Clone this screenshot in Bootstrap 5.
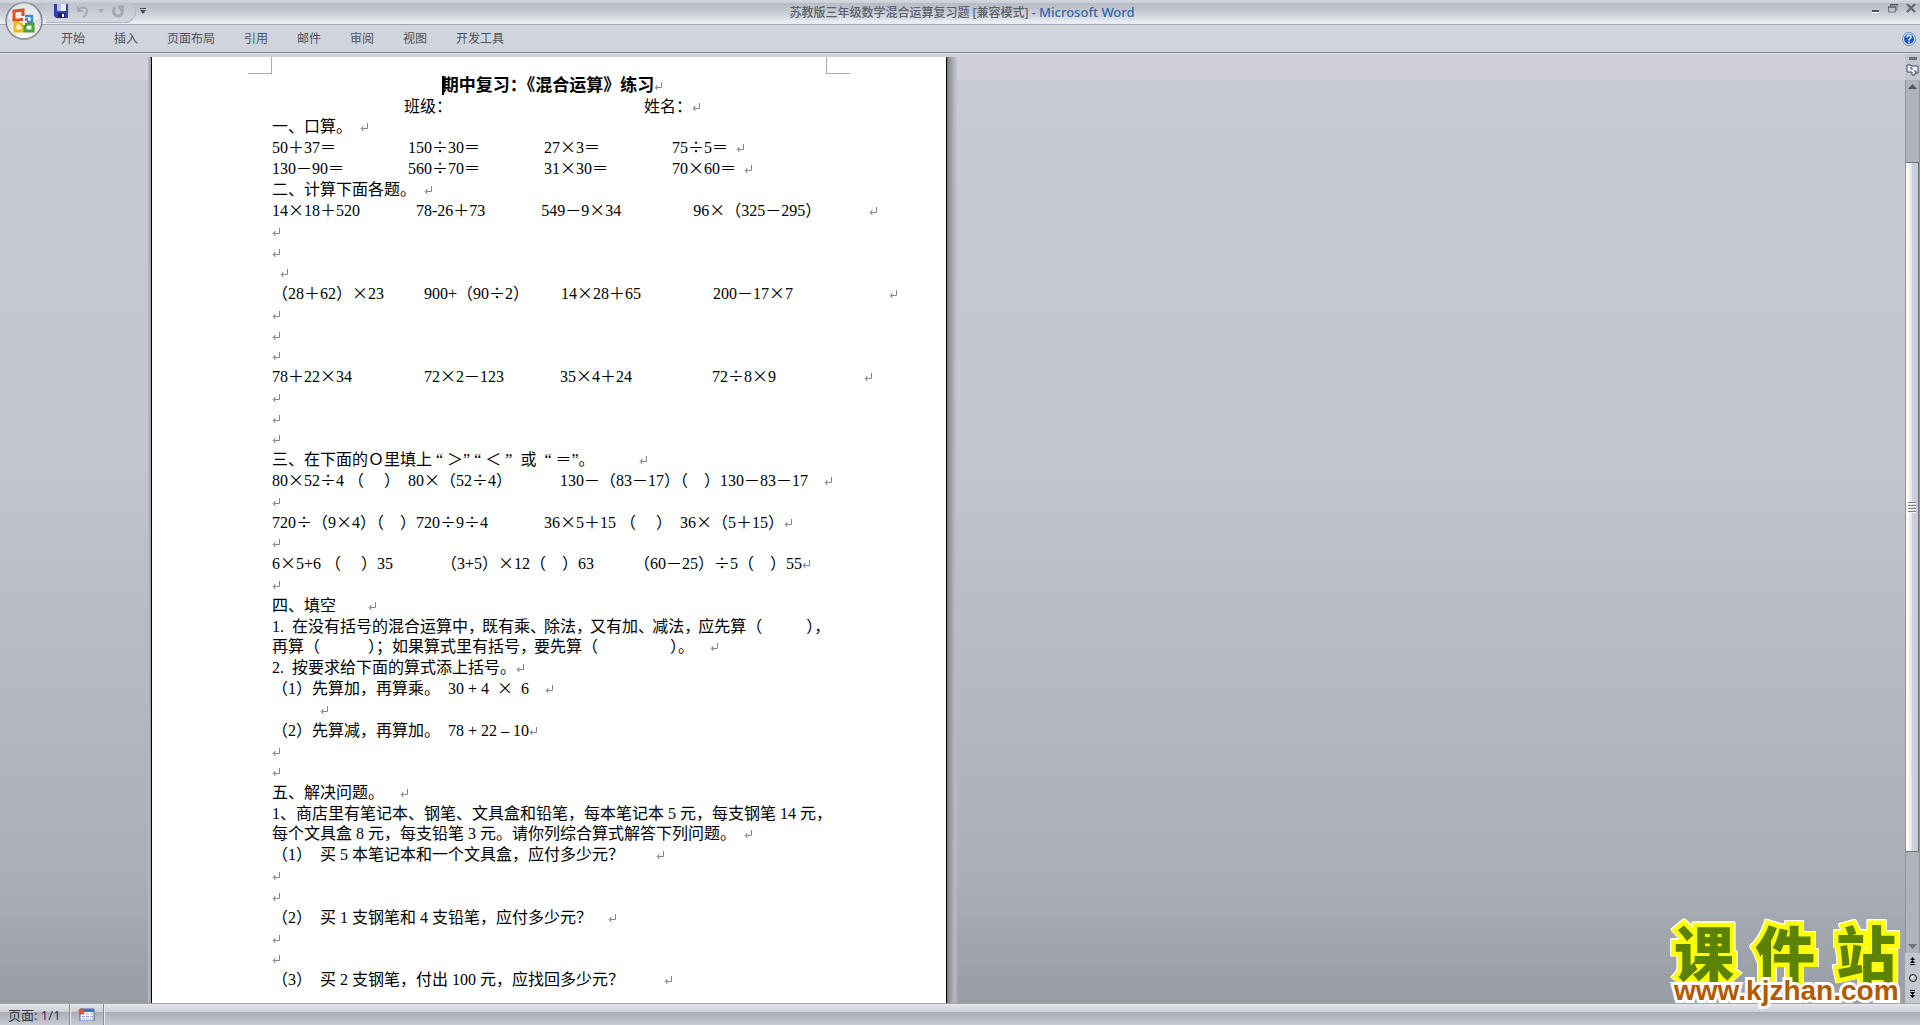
<!DOCTYPE html>
<html lang="zh-CN">
<head>
<meta charset="utf-8">
<meta name="viewport" content="width=device-width, initial-scale=1">
<title>苏教版三年级数学混合运算复习题 - Microsoft Word</title>
<link href="https://cdn.jsdelivr.net/npm/bootstrap@5.3.0/dist/css/bootstrap.min.css" rel="stylesheet">
<style>
body{font-family:"Noto Sans","Noto Sans CJK SC",sans-serif;font-size:12px;line-height:16px;color:#4b525c;background:#c8cbd3}
button{background:none;border:0;padding:0;color:inherit;display:flex;align-items:center;justify-content:center}
svg{display:block}
.titlebar{height:25px;display:grid;grid-template-columns:1fr auto 1fr;background:linear-gradient(#d3d7de 0,#c9cdd5 3px,#b8bcc6 3px,#bec2cb 8px,#c8cbd3 12px,#d2d5db 16px,#e0e3e8 20px,#e8ebf2 21px,#e8ebf2 24px);border-bottom:1px solid #a3a9b3}
.titlebar h1{font-size:12px;line-height:16px;margin:0;padding-top:4px;padding-left:4px;color:#5b616b;white-space:pre}
.app-name{color:#2f69ae;font-size:13px}
.orb{left:5px;top:2px;width:38px;height:38px;z-index:3}
.quick{margin-left:46px;height:23px;width:90px;padding-left:8px;gap:8px;border:1px solid #b2b6bf;border-left:0;border-top:0;border-radius:0 12px 12px 0;background:linear-gradient(#d3d7de,#bfc3cc 4px,#d5d8de)}
.ribbon{height:28px;background:#d0d4dd;border-bottom:1px solid #7b828c;padding-left:61px;box-shadow:0 1px #e3e9ee;z-index:2}
.ribbon nav{gap:29px}
.ribbon a{color:#4b525c;text-decoration:none}
.workspace{min-height:0;background:linear-gradient(#d2cfda 0,#d2cfda 27px,#c8cad3 27px,#c3c6cf 42%,#bbbfc8 54%,#aaaeb6 87%,#989da5 100%)}
.sheet{margin:4px 0 0 148px;width:810px;overflow:hidden}
.edge-left{width:4px;background:linear-gradient(90deg,#b8bbc4,#9da0a9 3px,#000 3px)}
.edge-right{width:12px;background:linear-gradient(90deg,#000 1px,#75777d 1px,#8b8e95 3px,#a3a6ae 6px,#b9bcc5 9px,#c4c7d000)}
.paper{background:#fff;padding-bottom:80px;overflow:hidden}
.crops{height:17px;padding:0 96px;margin-bottom:1px}
.crops span{border-bottom:1px solid #a6a9b3}
.crops .cl{width:24px;border-right:1px solid #a6a9b3}
.crops .cr{width:24px;border-left:1px solid #a6a9b3}
.doc{font-family:"Liberation Serif","Noto Sans CJK SC",serif;color:#000;font-size:16px;line-height:21px;padding:0 114px 0 120px;white-space:pre;text-spacing-trim:space-all}
.doc p,.doc h2{margin:0;height:21px;line-height:21px}
.doc .snug{height:20px;line-height:20px}
.doc h2{font-size:17px;font-weight:700;text-align:center}
.z{font-family:"Noto Sans CJK SC",sans-serif;display:inline-block;width:16px;text-align:center;line-height:16px}
.h{font-feature-settings:"halt"}
.n{margin-right:-2px}
.pm{display:inline-block;width:8px;height:8px;vertical-align:1px;fill:none;stroke:#858585}
.caret{display:inline-block;width:2px;height:19px;margin-right:-2px;vertical-align:-4px;background:#000}
.vscroll{width:15px;background:#c3c6cf}
.track{background:#b0b3bc;border-left:1px solid #92959e;border-right:1px solid #92959e}
.thumb{border:1px solid #6d717b;border-left:0;background:linear-gradient(90deg,#fffbe9 3px,#eef1f7 3px,#e2e5ee 6px,#ced2de 6px,#c6cad6);gap:1px}
.thumb i{width:8px;height:1px;background:#7c8187;box-shadow:0 1px #f4f6fa}
.status{height:22px;font-size:13px;color:#33373d;border-top:1px solid #a3a6af;background:linear-gradient(#e4e6ea,#cbced5 8px,#a9adb7 8px,#c8cbd3)}
.status>div{border-right:1px solid #868a93;box-shadow:1px 0 #e6e8ec}
.brand{right:20px;bottom:22px;width:230px;font-family:"Noto Sans CJK SC",sans-serif;font-weight:900}
.brand-cn{font-size:60px;line-height:56px;color:#5b8200;-webkit-text-stroke:9px #fdff00;paint-order:stroke fill;filter:drop-shadow(1px 0 #fff) drop-shadow(-1px 0 #fff) drop-shadow(0 -1px #fff)}
.brand-url{font-family:"Liberation Sans",sans-serif;font-weight:700;font-size:28px;line-height:24px;color:#b35a00;-webkit-text-stroke:6px #fff;paint-order:stroke fill;text-decoration:none;padding-left:4px}
</style>
<script src="https://cdn.jsdelivr.net/npm/bootstrap@5.3.0/dist/js/bootstrap.bundle.min.js"></script>
</head>
<body class="vh-100 overflow-hidden d-flex flex-column position-relative">
<svg width="0" height="0" class="position-absolute"><symbol id="ret" viewBox="0 0 8 8"><path d="M7.500 0v5.500H2M3.500 3L1 5.500 3.500 8M2.500 4v3"/></symbol></svg>

<button class="orb position-absolute" aria-label="Office">
<svg width="38" height="38" viewBox="0 0 38 38"><defs><radialGradient id="og" cx=".5" cy=".85" r=".9"><stop offset="0" stop-color="#fff"/><stop offset=".5" stop-color="#e4e5e9"/><stop offset="1" stop-color="#b9bcc4"/></radialGradient></defs><circle cx="19" cy="19" r="18" fill="url(#og)" stroke="#83868e" stroke-width="1.500"/><path d="M3 17a16 16 0 0 1 32 0q-16 4-32 0" fill="#fff" opacity=".5"/>
<g fill="none" stroke-width="3"><path d="M15 18H9V9l9-1v6" stroke="#e0501a"/><path d="M20 14h7v6h-5" stroke="#3c8fd0" stroke-width="2.500"/><path d="M15 21h-5v8h8v-6" stroke="#f7b51c"/><path d="M22 22h6v7h-8v-6" stroke="#4aa032"/></g><path d="M15 16h3v3h-3z" fill="#e0501a"/><path d="M20 16h3v3h-3z" fill="#3c8fd0"/><path d="M15 21h3v3h-3z" fill="#f7b51c"/><path d="M20 21h3v3h-3z" fill="#4aa032"/></svg></button>

<header class="titlebar flex-shrink-0">
<div class="d-flex align-items-start">
<div class="quick d-flex align-items-center">
<button aria-label="保存"><svg width="14" height="14"><path d="M0 0h14v14H2L0 12z" fill="#3340a8"/><path d="M3 0h9v7H3z" fill="#e9edfb"/><path d="M3 0h4v7H3z" fill="#b3c1f0"/><path d="M4 9h7v5H4z" fill="#1c2560"/><path d="M8 10h2v3H8z" fill="#fff"/></svg></button>
<button aria-label="撤消"><svg width="14" height="13" fill="none" stroke="#a6aab5" stroke-width="2"><path d="M2 1v5h5M2 6c3-5 9-4 9 0 0 3-2 5-4 6"/></svg></button>
<button aria-label="撤消列表"><svg width="6" height="4"><path d="M0 0h6L3 4z" fill="#a6aab5"/></svg></button>
<button aria-label="恢复"><svg width="12" height="13" fill="none" stroke="#a6aab5" stroke-width="3"><path d="M3 2c-3 4-1 9 3 9s6-5 2-8M6 2h5v4"/></svg></button>
</div>
<button class="mt-1 ms-1 pt-1" aria-label="自定义快速访问工具栏"><svg width="6" height="6"><path d="M0 0h6v1H0zM0 2h6L3 6z" fill="#4a4e57"/></svg></button>
</div>
<h1>苏教版三年级数学混合运算复习题 [兼容模式] <span class="app-name">- Microsoft Word</span></h1>
<div class="d-flex justify-content-end align-items-start gap-2 pt-1 pe-1">
<button aria-label="最小化"><svg width="9" height="10"><path d="M1 6h7v2H1z" fill="#4f545e"/><path d="M1 8h7v1H1z" fill="#fff"/></svg></button>
<button aria-label="还原"><svg width="10" height="9" fill="none" stroke="#6b7486"><path d="M2.500 3V1H9v5H8M.500 3h7v5h-7z"/><path d="M2 .500h8M0 3h8" stroke="#4f545e"/></svg></button>
<button aria-label="关闭"><svg width="10" height="9"><path d="M1 0l8 8M9 0L1 8" stroke="#5b6272" stroke-width="2"/></svg></button>
</div>
</header>

<div class="ribbon flex-shrink-0 position-relative d-flex align-items-center justify-content-between">
<nav class="d-flex"><a href="#">开始</a><a href="#">插入</a><a href="#">页面布局</a><a href="#">引用</a><a href="#">邮件</a><a href="#">审阅</a><a href="#">视图</a><a href="#">开发工具</a></nav>
<button class="me-1" aria-label="帮助"><svg width="14" height="14"><circle cx="7" cy="7" r="6.500" fill="#d8e6fb" stroke="#5c8fd0"/><circle cx="7" cy="7" r="5" fill="#1d55d2"/><path d="M5 5.500c0-3 4-3 4-.500C9 6.500 7 6.500 7 8.500M7 9.500V11" fill="none" stroke="#fff" stroke-width="1.500"/></svg></button>
</div>

<main class="workspace flex-grow-1 d-flex">
<div class="flex-grow-1 overflow-hidden d-flex">
<div class="sheet d-flex">
<div class="edge-left flex-shrink-0"></div>
<div class="paper flex-grow-1">
<div class="crops d-flex justify-content-between"><span class="cl"></span><span class="cr"></span></div>
<article class="doc"><h2><span class="caret"></span>期中复习：<span class="h">《</span>混合运算》练习<svg class="pm"><use href="#ret"/></svg></h2><p>                                 班级：                                                姓名：<svg class="pm"><use href="#ret"/></svg></p><p class="snug">一、口算。  <svg class="pm"><use href="#ret"/></svg></p><p>50＋37＝                  150<span class="z">÷</span>30＝                27<span class="z">×</span>3＝                  75<span class="z">÷</span>5＝  <svg class="pm"><use href="#ret"/></svg></p><p>130－90＝                560<span class="z">÷</span>70＝                31<span class="z">×</span>30＝                70<span class="z">×</span>60＝  <svg class="pm"><use href="#ret"/></svg></p><p>二、计算下面各题。  <svg class="pm"><use href="#ret"/></svg></p><p>14<span class="z">×</span>18＋520              78-26＋73              549－9<span class="z">×</span>34                  96<span class="z">×</span>（325－295）            <svg class="pm"><use href="#ret"/></svg></p><p><svg class="pm"><use href="#ret"/></svg></p><p><svg class="pm"><use href="#ret"/></svg></p><p class="snug">  <svg class="pm"><use href="#ret"/></svg></p><p>（28＋62）<span class="z">×</span>23          900+（90<span class="z">÷</span>2）        14<span class="z">×</span>28＋65                  200－17<span class="z">×</span>7                        <svg class="pm"><use href="#ret"/></svg></p><p><svg class="pm"><use href="#ret"/></svg></p><p><svg class="pm"><use href="#ret"/></svg></p><p class="snug"><svg class="pm"><use href="#ret"/></svg></p><p>78＋22<span class="z">×</span>34                  72<span class="z">×</span>2－123              35<span class="z">×</span>4＋24                    72<span class="z">÷</span>8<span class="z">×</span>9                      <svg class="pm"><use href="#ret"/></svg></p><p><svg class="pm"><use href="#ret"/></svg></p><p><svg class="pm"><use href="#ret"/></svg></p><p class="snug"><svg class="pm"><use href="#ret"/></svg></p><p>三、在下面的Ｏ里填上 “ ＞” “ ＜ ”  或  “ ＝”。           <svg class="pm"><use href="#ret"/></svg></p><p>80<span class="z">×</span>52<span class="z">÷</span>4 （     ）  80<span class="z">×</span>（52<span class="z">÷</span>4）            130－（83－17<span class="h">）</span>（    ）130－83－17    <svg class="pm"><use href="#ret"/></svg></p><p><svg class="pm"><use href="#ret"/></svg></p><p>720<span class="z">÷</span>（9<span class="z">×</span>4<span class="h">）</span>（    ）720<span class="z">÷</span>9<span class="z">÷</span>4              36<span class="z">×</span>5＋15 （     ）  36<span class="z">×</span>（5＋15）<svg class="pm"><use href="#ret"/></svg></p><p class="snug"><svg class="pm"><use href="#ret"/></svg></p><p>6<span class="z">×</span>5+6 （     ）35            （3+5）<span class="z">×</span>12（    ）63          （60－25）<span class="z">÷</span>5（    ）55<svg class="pm"><use href="#ret"/></svg></p><p><svg class="pm"><use href="#ret"/></svg></p><p>四、填空        <svg class="pm"><use href="#ret"/></svg></p><p>1.  在没有括号的混合运算中<span class="n">，</span>既有乘<span class="n">、</span>除法<span class="n">，</span>又有加<span class="n">、</span>减法<span class="n">，</span>应先算（           <span class="h">）</span>，</p><p class="snug">再算（            <span class="h">）</span>；如果算式里有括号<span class="n">，</span>要先算（                  <span class="h">）</span>。    <svg class="pm"><use href="#ret"/></svg></p><p>2.  按要求给下面的算式添上括号。<svg class="pm"><use href="#ret"/></svg></p><p>（1）先算加，再算乘。  30 + 4  <span class="z">×</span>  6    <svg class="pm"><use href="#ret"/></svg></p><p>            <svg class="pm"><use href="#ret"/></svg></p><p>（2）先算减，再算加。  78 + 22 – 10<svg class="pm"><use href="#ret"/></svg></p><p><svg class="pm"><use href="#ret"/></svg></p><p class="snug"><svg class="pm"><use href="#ret"/></svg></p><p>五、解决问题。    <svg class="pm"><use href="#ret"/></svg></p><p>1、商店里有笔记本、钢笔、文具盒和铅笔，每本笔记本 5 元，每支钢笔 14 元，</p><p class="snug">每个文具盒 8 元，每支铅笔 3 元。请你列综合算式解答下列问题。  <svg class="pm"><use href="#ret"/></svg></p><p>（1）  买 5 本笔记本和一个文具盒，应付多少元？        <svg class="pm"><use href="#ret"/></svg></p><p><svg class="pm"><use href="#ret"/></svg></p><p><svg class="pm"><use href="#ret"/></svg></p><p>（2）  买 1 支钢笔和 4 支铅笔，应付多少元？    <svg class="pm"><use href="#ret"/></svg></p><p><svg class="pm"><use href="#ret"/></svg></p><p class="snug"><svg class="pm"><use href="#ret"/></svg></p><p>（3）  买 2 支钢笔，付出 100 元，应找回多少元？          <svg class="pm"><use href="#ret"/></svg></p></article>
</div>
<div class="edge-right flex-shrink-0"></div>
</div>
</div>
<aside class="vscroll flex-shrink-0 d-flex flex-column align-items-stretch">
<button class="pt-1" aria-label="拆分"><svg width="8" height="3"><path d="M0 0h8v3H0z" fill="#6c7078"/></svg></button>
<button class="mb-1 pt-1" aria-label="标尺"><svg width="13" height="12"><path d="M1 1h4v1h7v7H9v2H6V8H1z" fill="#f4f1f8" stroke="#34506b"/><path d="M4 4h2v2M8 7h2v2" fill="none" stroke="#34506b"/></svg></button>
<div class="track flex-grow-1 d-flex flex-column">
<button class="pt-1 pb-2" aria-label="向上滚动"><svg width="9" height="5"><path d="M0 5h9L4.500 0z" fill="#50545d"/></svg></button>
<div style="flex:65"></div>
<div class="thumb d-flex flex-column align-items-center justify-content-center" style="flex:690"><i></i><span></span><i></i><span></span><i></i><span></span><i></i></div>
<div style="flex:92"></div>
<button class="pb-1" aria-label="向下滚动"><svg width="9" height="5"><path d="M0 0h9L4.500 5z" fill="#6c717e"/></svg></button>
</div>
<button class="pt-1" aria-label="前一页"><svg width="7" height="9"><path d="M3.500 0L6 3H1zM3.500 3L6 6H1zM1 7h5v1H1z"/></svg></button>
<button class="pt-2" aria-label="选择浏览对象"><svg width="8" height="8"><circle cx="4" cy="4" r="3.500" fill="#c9cbd0" stroke="#111"/><circle cx="3" cy="3" r="1" fill="#fff"/></svg></button>
<button class="pt-2 pb-1" aria-label="下一页"><svg width="7" height="9"><path d="M1 0h5v1H1zM1 2h5L3.500 5zM1 5h5L3.500 8z"/></svg></button>
</aside>
</main>

<footer class="status flex-shrink-0 d-flex">
<div class="d-flex align-items-center ps-2 pe-2">页面: 1/1</div>
<div class="d-flex align-items-center px-2"><button aria-label="宏录制"><svg width="17" height="13"><path d="M2 1h14v12H2z" fill="#fff" stroke="#4565a5"/><path d="M3 1h13v3H3z" fill="#3e72cf"/><path d="M4 6h3M8 6h3M12 6h3M4 8.500h3M8 8.500h3M12 8.500h3M4 11h3M8 11h3M12 11h3" stroke="#90a8d8"/><circle cx="3.500" cy="3.500" r="3" fill="#dd5535"/></svg></button></div>
</footer>

<div class="brand position-absolute">
<div class="brand-cn d-flex justify-content-between px-1"><span>课</span><span>件</span><span>站</span></div>
<a class="brand-url d-block position-relative" href="#">www.kjzhan.com</a>
</div>
</body>
</html>
